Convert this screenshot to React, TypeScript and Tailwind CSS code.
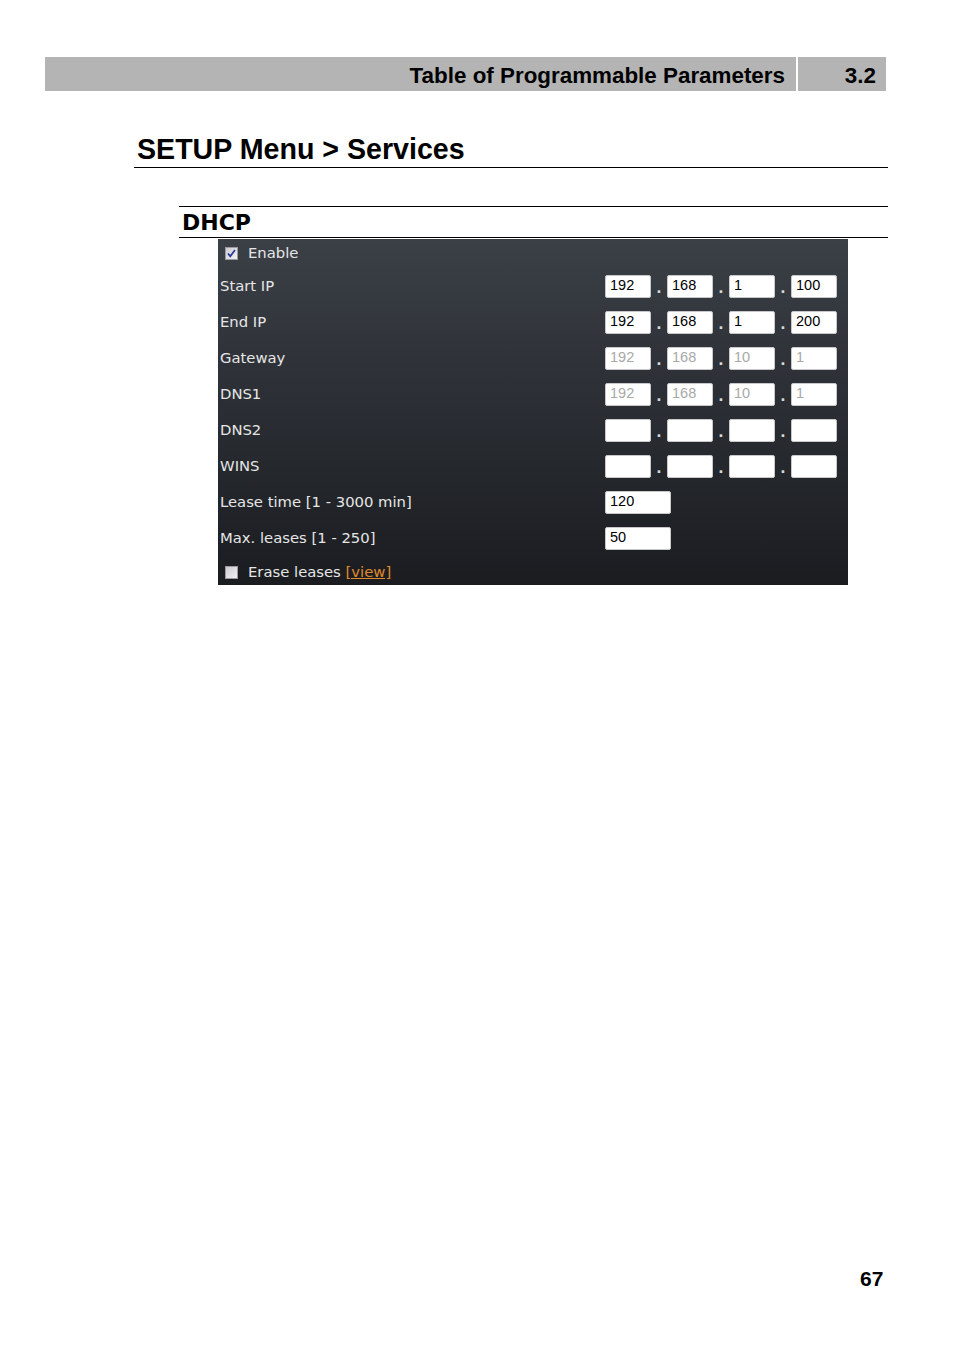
import React from "react";

const panelFont = { fontFamily: '"DejaVu Sans", Verdana, sans-serif' };

type IpRow = { label: string; values: string[]; disabled?: boolean };

const ipRows: IpRow[] = [
  { label: "Start IP", values: ["192", "168", "1", "100"] },
  { label: "End IP", values: ["192", "168", "1", "200"] },
  { label: "Gateway", values: ["192", "168", "10", "1"], disabled: true },
  { label: "DNS1", values: ["192", "168", "10", "1"], disabled: true },
  { label: "DNS2", values: ["", "", "", ""] },
  { label: "WINS", values: ["", "", "", ""] },
];

function CheckBox({ checked }: { checked: boolean }) {
  return (
    <svg width="13" height="13" viewBox="0 0 13 13" className="shrink-0">
      <defs>
        <linearGradient id={checked ? "cbOn" : "cbOff"} x1="0" y1="0" x2="1" y2="1">
          <stop offset="0" stopColor="#c9c9cf" />
          <stop offset="1" stopColor="#f4f4f6" />
        </linearGradient>
      </defs>
      <rect x="0.5" y="0.5" width="12" height="12" fill={`url(#${checked ? "cbOn" : "cbOff"})`} stroke="#9a9aa0" />
      {checked && (
        <path d="M3 6.5 L5.3 9.2 L10 3" fill="none" stroke="#2b3a9a" strokeWidth="1.8" />
      )}
    </svg>
  );
}

function Box({ value, disabled, wide }: { value: string; disabled?: boolean; wide?: boolean }) {
  return (
    <div
      className={`flex h-[23px] items-center rounded-[2px] border border-[#c8c8c8] bg-white pl-[4px] text-[14.5px] ${
        wide ? "w-[66px]" : "w-[46px]"
      } ${disabled ? "text-[#a8a8a8]" : "text-black"}`}
      style={{ fontFamily: '"Liberation Sans", Arial, sans-serif' }}
    >
      {value}
    </div>
  );
}

function Dot() {
  return <span className="w-[16px] pt-[5px] text-center text-[14px] font-bold text-[#d8d8d8]">.</span>;
}

function Row({ label, children }: { label: string; children?: React.ReactNode }) {
  return (
    <div className="flex h-[36px] items-center">
      <div className="w-[387px] pl-[2px] text-[14.8px] text-[#e6e6e6]">{label}</div>
      <div className="flex items-center">{children}</div>
    </div>
  );
}

export default function App() {
  return (
    <div
      className="relative h-[1350px] w-[954px] overflow-hidden bg-white pt-[57px] text-black"
      style={{ fontFamily: '"Liberation Sans", Arial, sans-serif' }}
    >
      {/* Running header */}
      <div className="ml-[45px] flex h-[34px] w-[841px] bg-[#b4b4b4] text-[22.4px] font-bold leading-none">
        <div className="flex flex-1 items-center justify-end pr-[11px] pt-[5px]">
          Table of Programmable Parameters
        </div>
        <div className="w-[2px] bg-white" />
        <div className="flex w-[88px] items-center justify-end pr-[10px] pt-[5px]">3.2</div>
      </div>

      {/* Section heading */}
      <div className="ml-[134px] mt-[40px] w-[754px] border-b border-black pb-[2px] pl-[3px] pt-[3px] text-[28.6px] font-bold leading-[31px]">
        SETUP Menu &gt; Services
      </div>

      {/* DHCP sub heading */}
      <div
        className="ml-[179px] mt-[38px] flex h-[32px] w-[709px] items-center border-y border-black pl-[3px] pt-[1px] text-[22px] font-bold"
        style={panelFont}
      >
        DHCP
      </div>

      {/* Screenshot panel */}
      <div
        className="ml-[218px] mt-[1px] h-[346px] w-[630px] bg-gradient-to-b from-[#3b4047] to-[#1a1c20]"
        style={panelFont}
      >
        <div className="flex h-[29px] items-center gap-[10px] pl-[7px] text-[14.8px] text-[#e6e6e6]">
          <CheckBox checked />
          <span>Enable</span>
        </div>

        {ipRows.map((r) => (
          <Row key={r.label} label={r.label}>
            <Box value={r.values[0]} disabled={r.disabled} />
            <Dot />
            <Box value={r.values[1]} disabled={r.disabled} />
            <Dot />
            <Box value={r.values[2]} disabled={r.disabled} />
            <Dot />
            <Box value={r.values[3]} disabled={r.disabled} />
          </Row>
        ))}

        <Row label="Lease time [1 - 3000 min]">
          <Box value="120" wide />
        </Row>
        <Row label="Max. leases [1 - 250]">
          <Box value="50" wide />
        </Row>

        <div className="flex h-[29px] items-center gap-[10px] pl-[7px] pt-[3px] text-[14.8px] text-[#e6e6e6]">
          <CheckBox checked={false} />
          <span>
            Erase leases <span className="text-[#e08a2c] underline">[view]</span>
          </span>
        </div>
      </div>

      {/* Page number */}
      <div className="absolute left-[860px] top-[1263px] text-[21px] font-bold">67</div>
    </div>
  );
}
